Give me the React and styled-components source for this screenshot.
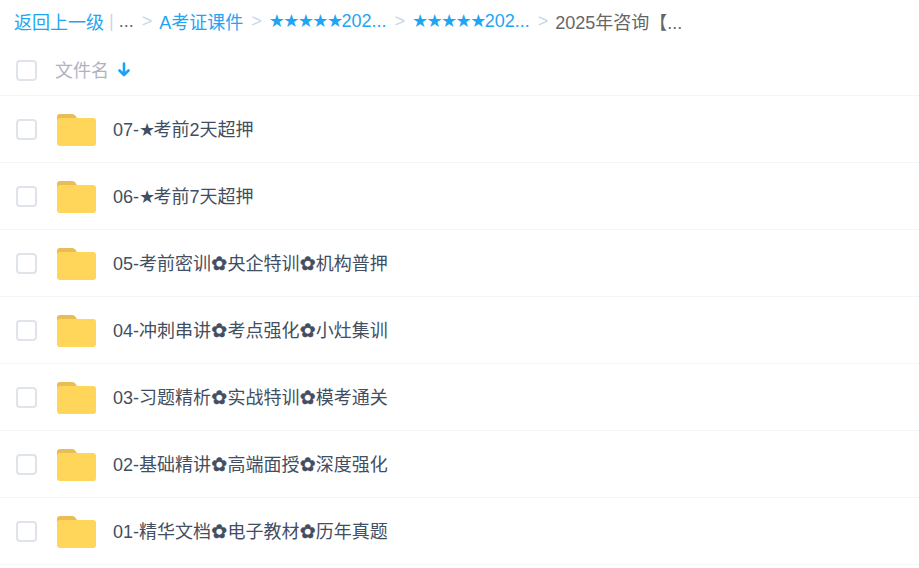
import { createGlobalStyle, styled } from 'styled-components';

const GlobalStyle = createGlobalStyle`
  html, body {
    margin: 0;
    background: #fff;
    font-family: "Liberation Sans", "DejaVu Sans", "Noto Sans CJK SC", sans-serif;
    overflow: hidden;
  }
`;

const crumbs = ['A考证课件', '★★★★★202...', '★★★★★202...'];

const files = [
  '07-★考前2天超押',
  '06-★考前7天超押',
  '05-考前密训✿央企特训✿机构普押',
  '04-冲刺串讲✿考点强化✿小灶集训',
  '03-习题精析✿实战特训✿模考通关',
  '02-基础精讲✿高端面授✿深度强化',
  '01-精华文档✿电子教材✿历年真题',
];

// the star and florette glyphs sit in their own spans, their spacing differs from the text
const withGlyphs = (text) =>
  text.split(/(★+|✿)/).map((part, i) => {
    if (part.startsWith('★')) return <Star key={i}>{part}</Star>;
    if (part === '✿') return <Florette key={i}>{part}</Florette>;
    return part;
  });

const FolderIcon = () => (
  <svg width="39" height="32" viewBox="0 0 39 32" fill="none">
    <path d="M0 3a3 3 0 0 1 3-3h12c2 0 3 1 4 2.500L21 6H0Z" fill="#E9BC55" />
    <path d="M0 7a3 3 0 0 1 3-3h33a3 3 0 0 1 3 3v22a3 3 0 0 1-3 3H3a3 3 0 0 1-3-3Z" fill="#FFD659" />
  </svg>
);

const SortIcon = () => (
  <svg width="12" height="15" viewBox="0 0 12 15" fill="none">
    <path d="M6 1.500v11.500M1.500 8.500 6 13l4.500-4.500" stroke="#1AA3F5" strokeWidth="2.600" strokeLinecap="round" strokeLinejoin="round" />
  </svg>
);

export default function App() {
  return (
    <Page>
      <GlobalStyle />
      <Breadcrumb>
        <CrumbLink>返回上一级</CrumbLink>
        <Pipe>|</Pipe>
        <CrumbText>...</CrumbText>
        {crumbs.map((c, i) => (
          <Crumb key={i}>
            <Arrow>&gt;</Arrow>
            <CrumbLink>{withGlyphs(c)}</CrumbLink>
          </Crumb>
        ))}
        <Crumb>
          <Arrow>&gt;</Arrow>
          <CrumbText>2025年咨询【...</CrumbText>
        </Crumb>
      </Breadcrumb>
      <HeadRow>
        <Check />
        <HeadName>文件名</HeadName>
        <SortWrap>
          <SortIcon />
        </SortWrap>
      </HeadRow>
      {files.map((name) => (
        <FileRow key={name}>
          <Check />
          <FolderBox>
            <FolderIcon />
          </FolderBox>
          <FileName>{withGlyphs(name)}</FileName>
        </FileRow>
      ))}
    </Page>
  );
}

const Page = styled.div`
  width: 919px;
  height: 568px;
  overflow: hidden;
`;

const Breadcrumb = styled.div`
  height: 42px;
  padding-left: 14px;
  padding-bottom: 2px;
  display: flex;
  align-items: center;
  font-size: 18px;
  white-space: nowrap;
`;

const Star = styled.span`
  line-height: 1;
  letter-spacing: -1.600px;
`;

const Florette = styled.span`
  font-size: 19px;
  line-height: 1;
  padding: 0 0.250px;
  -webkit-text-stroke: 0.500px currentColor;
`;

const CrumbLink = styled.span`
  color: #1ea5f3;
`;

const CrumbText = styled.span`
  color: #666;
`;

const Pipe = styled.span`
  color: #c9d6e6;
  margin: 0 5px;
  font-size: 18px;
`;

const Crumb = styled.span`
  display: flex;
  align-items: center;
`;

const Arrow = styled.span`
  color: #c5d6ec;
  font-size: 18px;
  margin: 0 7px 0 8px;
`;

const HeadRow = styled.div`
  height: 50px;
  padding-top: 1px;
  padding-left: 16px;
  display: flex;
  align-items: center;
  border-bottom: 1px solid #f3f4f7;
`;

const Check = styled.span`
  width: 17px;
  height: 17px;
  border: 2px solid #dfe3ea;
  border-radius: 4px;
  flex: none;
`;

const HeadName = styled.span`
  margin-left: 18px;
  margin-right: 9px;
  margin-bottom: 3px;
  font-size: 18px;
  color: #afb3bf;
`;

const SortWrap = styled.span`
  display: flex;
  margin-bottom: 1px;
`;

const FileRow = styled.div`
  height: 66px;
  padding-left: 16px;
  display: flex;
  align-items: center;
  border-bottom: 1px solid #f3f4f7;
`;

const FolderBox = styled.span`
  display: flex;
  margin-left: 20px;
  margin-top: 1px;
  margin-right: 18px;
`;

const FileName = styled.span`
  margin-bottom: 2px;
  margin-left: -1px;
  font-size: 18px;
  color: #424e61;
`;
